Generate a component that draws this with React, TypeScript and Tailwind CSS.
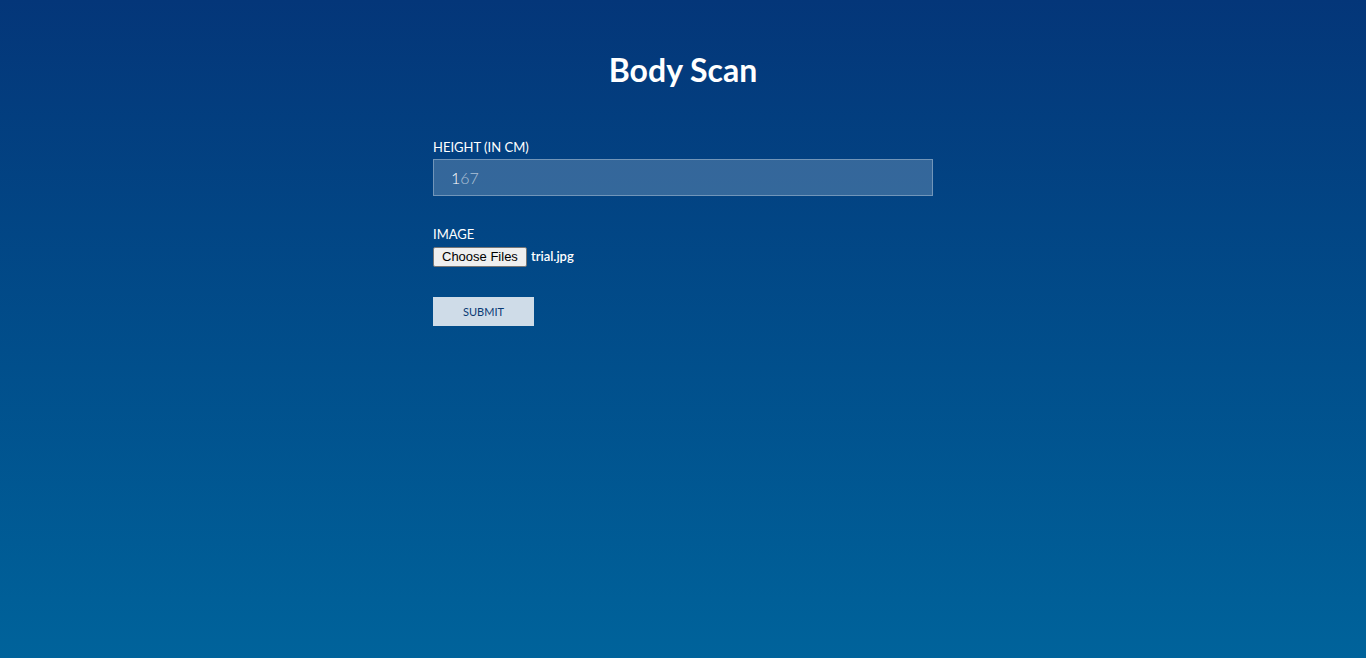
export default function App() {
  return (
    <div
      className="min-h-[658px] w-full bg-gradient-to-b from-[#043679] to-[#00639b] text-white"
      style={{ fontFamily: 'Lato, "Liberation Sans", sans-serif' }}
    >
      <div className="pt-[49px] text-center">
        <h1 className="text-[32px] font-bold leading-[42px]">Body Scan</h1>
      </div>

      <form className="mx-auto mt-[48px] w-[500px]" onSubmit={(e) => e.preventDefault()}>
        <div>
          <label className="block text-[13px] leading-[16px]">HEIGHT (IN CM)</label>
          <div className="mt-[4px] flex h-[37px] items-center border border-white/30 bg-white/20 px-[17px] text-[16px] font-light">
            <span className="text-white">1</span>
            <span className="text-white/60">67</span>
          </div>
        </div>

        <div className="mt-[30px]">
          <label className="block text-[13px] leading-[16px]">IMAGE</label>
          <div className="mt-[5px] flex items-center gap-[4px]">
            <button
              type="button"
              className="h-[20px] rounded-[2px] border border-[#767676] bg-[#efefef] px-[8px] text-[13px] leading-[18px] text-black"
              style={{ fontFamily: '"Liberation Sans", Arial, sans-serif' }}
            >
              Choose Files
            </button>
            <span className="text-[13px] font-semibold">trial.jpg</span>
          </div>
        </div>

        <button
          type="submit"
          className="mt-[30px] h-[29px] w-[101px] bg-[#cfdce8] pt-[2px] text-[11px] text-[#0a3a73]"
        >
          SUBMIT
        </button>
      </form>
    </div>
  );
}
